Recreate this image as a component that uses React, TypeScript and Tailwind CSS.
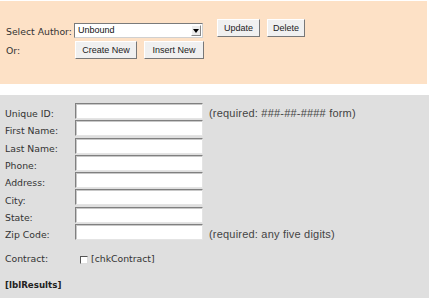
const label = "font-['DejaVu_Sans',Verdana,sans-serif] text-[9.3px] text-[#333]";
const hint = "font-['Liberation_Sans',Arial,sans-serif] text-[11px] text-[#444]";
const btn =
  "h-[18px] px-0 whitespace-nowrap bg-[#f0f0f0] border border-t-[#fff] border-l-[#fff] border-b-[#777] border-r-[#777] font-['Liberation_Sans',Arial,sans-serif] text-[9px] text-[#222] leading-none";
const field =
  "w-[128px] h-[16px] shrink-0 bg-white border border-t-[#808080] border-l-[#808080] border-b-[#e4e4e4] border-r-[#e4e4e4] shadow-[inset_1px_1px_0_#c8c8c8]";

const fields = [
  { name: "Unique ID:", note: "(required: ###-##-#### form)" },
  { name: "First Name:" },
  { name: "Last Name:" },
  { name: "Phone:" },
  { name: "Address:" },
  { name: "City:" },
  { name: "State:" },
  { name: "Zip Code:", note: "(required: any five digits)" },
];

export default function App() {
  return (
    <div className="w-[431px] h-[299px] bg-white pt-[1px]">
      {/* author picker */}
      <div className="w-[427px] h-[83px] bg-[#fde1c6] pt-[18px] pl-[6px]">
        <div className="flex items-start h-[19px]">
          <span className={`${label} w-[68px] mt-[6px]`}>Select Author:</span>
          <div className="relative mt-[4px] w-[129px] h-[15px] bg-white border border-t-[#7a7a7a] border-l-[#7a7a7a] border-b-[#d0d0d0] border-r-[#d0d0d0] flex items-center pl-[3px]">
            <span className="font-['Liberation_Sans',Arial,sans-serif] text-[9px] text-[#111]">Unbound</span>
            <div className="absolute right-[1px] top-[1px] w-[10px] h-[11px] bg-[#ececec] border border-t-[#fff] border-l-[#fff] border-b-[#888] border-r-[#888] flex items-center justify-center">
              <svg width="6" height="4" viewBox="0 0 6 4">
                <path d="M0 0h6L3 4z" fill="#000" />
              </svg>
            </div>
          </div>
          <div className="flex gap-[7px] ml-[14px]">
            <button className={`${btn} w-[43px]`}>Update</button>
            <button className={`${btn} w-[38px]`}>Delete</button>
          </div>
        </div>
        <div className="flex items-start mt-[3px] h-[16px]">
          <span className={`${label} w-[69px] mt-[3px]`}>Or:</span>
          <div className="flex gap-[7px]">
            <button className={`${btn} h-[16px] w-[62px]`}>Create New</button>
            <button className={`${btn} h-[16px] w-[60px]`}>Insert New</button>
          </div>
        </div>
      </div>

      {/* author details */}
      <div className="mt-[11px] w-[429px] h-[203px] bg-[#dfdfdf] pt-[8px] pl-[5px]">
        <div className="flex flex-col gap-[1.3px]">
          {fields.map((f) => (
            <div key={f.name} className="flex items-center h-[16px]">
              <span className={`${label} w-[70px] mt-[6px]`}>{f.name}</span>
              <div className={field} />
              {f.note && <span className={`${hint} ml-[6px] mt-[5px] tracking-[0.2px]`}>{f.note}</span>}
            </div>
          ))}
        </div>
        <div className="flex items-center mt-[12px]">
          <span className={`${label} w-[75px]`}>Contract:</span>
          <div className="w-[8px] h-[8px] bg-white border border-t-[#555] border-l-[#555] border-b-[#ddd] border-r-[#ddd] mt-[1px]" />
          <span className={`${label} ml-[3px]`}>[chkContract]</span>
        </div>
        <div className="mt-[13px] font-['DejaVu_Sans',Verdana,sans-serif] text-[8.7px] font-bold text-[#222]">
          [lblResults]
        </div>
      </div>
    </div>
  );
}
